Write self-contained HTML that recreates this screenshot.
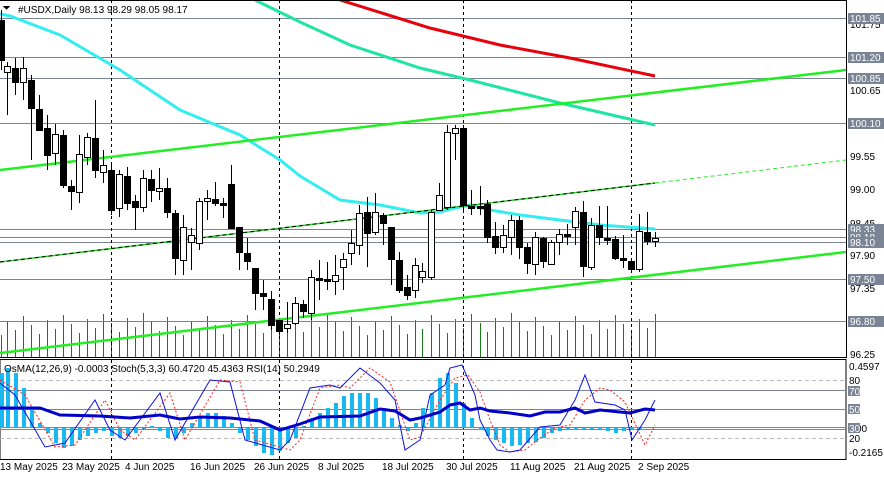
<!DOCTYPE html>
<html><head><meta charset="utf-8"><style>
body{margin:0;background:#fff;width:884px;height:479px;overflow:hidden;font-family:"Liberation Sans",sans-serif}
svg text{font-family:"Liberation Sans",sans-serif;font-size:10px;fill:#000}
</style></head><body>
<svg id="s" width="884" height="479" viewBox="0 0 884 479" xmlns="http://www.w3.org/2000/svg" shape-rendering="crispEdges">
<rect width="884" height="479" fill="#fff"/>
<g id="vol"></g>
<g stroke="#7a8494" stroke-width="1">
<line x1="0" y1="18.5" x2="846" y2="18.5"/><line x1="0" y1="57.5" x2="846" y2="57.5"/><line x1="0" y1="78.5" x2="846" y2="78.5"/><line x1="0" y1="123.5" x2="846" y2="123.5"/>
<line x1="0" y1="229.5" x2="846" y2="229.5"/><line x1="0" y1="237.5" x2="846" y2="237.5"/><line x1="0" y1="242.5" x2="846" y2="242.5"/><line x1="0" y1="279.5" x2="846" y2="279.5"/><line x1="0" y1="321.5" x2="846" y2="321.5"/>
</g>
<g stroke="#000" stroke-dasharray="3,3"><line x1="111.5" y1="0" x2="111.5" y2="459"/><line x1="279.5" y1="0" x2="279.5" y2="459"/><line x1="463.5" y1="0" x2="463.5" y2="459"/><line x1="631.5" y1="0" x2="631.5" y2="459"/></g>
<g fill="none" shape-rendering="auto">
<polyline points="340,0 430,28 500,45 570,58 655,76" stroke="#e8000b" stroke-width="3"/>
<polyline points="255,0 300,22 350,45 420,68 470,80 560,103 655,125" stroke="#1ee6a0" stroke-width="3"/>
<polyline points="0,14 10,16 60,35 120,70 180,110 240,135 280,160 300,176 340,200 380,205 420,213 440,212 455,208 470,205 490,210 520,215 560,220 600,225 655,229" stroke="#33eef0" stroke-width="3"/>
<line x1="0" y1="170" x2="846" y2="70" stroke="#22ee22" stroke-width="2.5"/>
<line x1="0" y1="353" x2="846" y2="252" stroke="#22ee22" stroke-width="2.5"/>
<line x1="0" y1="262" x2="655" y2="183" stroke="#22dd22" stroke-width="1.5"/>
<line x1="0" y1="262" x2="655" y2="183" stroke="#000" stroke-width="1" stroke-dasharray="4,3"/>
<line x1="655" y1="183" x2="846" y2="160" stroke="#22ee22" stroke-width="1" stroke-dasharray="4,3"/>
</g>
<g id="cand"></g>
<rect x="0" y="0" width="846" height="1" fill="#000"/>
<line x1="846.5" y1="0" x2="846.5" y2="358" stroke="#000"/>
<line x1="0" y1="357.5" x2="846" y2="357.5" stroke="#000"/>
<text x="18" y="13" font-size="11">#USDX,Daily  98.13 98.29 98.05 98.17</text>
<path d="M3,6 L10,6 L6.5,10z" fill="#000"/>
<g id="lab"></g>
<!-- sub panel -->
<rect x="0" y="359.5" width="846" height="100" fill="none" stroke="#000"/>
<g stroke="#bbb" stroke-dasharray="4,3"><line x1="0" y1="380.5" x2="846" y2="380.5"/><line x1="0" y1="438.5" x2="846" y2="438.5"/></g>
<g stroke="#7a8494"><line x1="0" y1="390.5" x2="846" y2="390.5"/><line x1="0" y1="409.5" x2="846" y2="409.5"/><line x1="0" y1="427.5" x2="846" y2="427.5"/><line x1="0" y1="429.5" x2="846" y2="429.5"/></g>
<g id="hist"></g>
<g fill="none" shape-rendering="auto">
<polyline stroke="#ff2020" stroke-width="1" stroke-dasharray="2,2" points="0,380 25,395 55,447 75,445 105,400 120,430 135,440 170,393 185,440 220,380 240,382 255,440 290,450 300,440 320,388 340,385 350,388 370,368 390,382 410,440 420,437 440,400 455,378 468,375 480,392 490,420 500,445 510,452 525,450 540,438 555,428 570,425 585,400 600,388 610,390 625,402 645,445 655,425"/>
<polyline stroke="#1010e0" stroke-width="1" points="0,383 15,395 45,447 65,443 95,400 110,430 125,440 160,393 175,440 210,380 230,382 245,440 280,450 290,440 310,388 330,385 340,388 360,368 380,383 395,400 405,450 420,440 430,395 445,385 450,368 462,365 475,395 480,420 490,440 497,450 510,452 520,450 540,427 560,425 575,400 585,375 595,402 615,405 625,410 632,440 645,420 655,400"/>
<polyline stroke="#0000c8" stroke-width="3" points="0,408 40,408 60,415 100,416 130,418 160,415 180,419 200,417 230,418 260,421 280,430 300,424 320,417 360,416 380,409 395,411 410,420 420,418 440,412 450,405 460,403 470,410 480,408 490,411 510,413 530,416 545,412 560,412 575,408 585,413 600,410 630,413 645,409 655,410"/>
</g>
<g font-size="10">
<text x="849" y="370">0.4597</text><text x="849" y="384">80</text><text x="849" y="456">-0.2165</text><text x="849" y="442">20</text><text x="856" y="432">00</text>
<rect x="848" y="386" width="12" height="10" fill="#7a8494"/><text x="849" y="395" fill="#fff" style="fill:#fff">70</text>
<rect x="848" y="404" width="12" height="10" fill="#7a8494"/><text x="849" y="413" style="fill:#fff">50</text>
<rect x="848" y="423" width="12" height="10" fill="#7a8494"/><text x="849" y="432" style="fill:#fff">30</text>
</g>
<g font-size="10">
<text x="0" y="470">13 May 2025</text><text x="62" y="470">23 May 2025</text><text x="125" y="470">4 Jun 2025</text><text x="190" y="470">16 Jun 2025</text><text x="254" y="470">26 Jun 2025</text><text x="318" y="470">8 Jul 2025</text><text x="382" y="470">18 Jul 2025</text><text x="446" y="470">30 Jul 2025</text><text x="510" y="470">11 Aug 2025</text><text x="574" y="470">21 Aug 2025</text><text x="638" y="470">2 Sep 2025</text>
</g>
<text x="4" y="372" font-size="10">OsMA(12,26,9) -0.0003  Stoch(5,3,3) 60.4720 45.4363  RSI(14) 50.2949</text>
<g font-size="10">
<text x="850" y="28">101.75</text><text x="850" y="94">100.65</text><text x="850" y="160">99.55</text><text x="850" y="193">99.00</text><text x="850" y="227">98.45</text><text x="850" y="259">97.90</text><text x="850" y="292">97.35</text><text x="850" y="358">96.25</text>
<rect x="848" y="13" width="36" height="11" fill="#7a8494"/><text x="850" y="22" style="fill:#fff">101.85</text>
<rect x="848" y="52" width="36" height="11" fill="#7a8494"/><text x="850" y="61" style="fill:#fff">101.20</text>
<rect x="848" y="73" width="36" height="11" fill="#7a8494"/><text x="850" y="82" style="fill:#fff">100.85</text>
<rect x="848" y="118" width="36" height="11" fill="#7a8494"/><text x="850" y="127" style="fill:#fff">100.10</text>
<rect x="848" y="224" width="36" height="11" fill="#7a8494"/><text x="850" y="233" style="fill:#fff">98.33</text>
<rect x="848" y="232" width="36" height="11" fill="#7a8494"/><text x="850" y="241" style="fill:#fff">98.18</text>
<rect x="848" y="237" width="36" height="11" fill="#7a8494"/><text x="850" y="246" style="fill:#fff">98.10</text>
<rect x="848" y="274" width="36" height="11" fill="#7a8494"/><text x="850" y="283" style="fill:#fff">97.50</text>
<rect x="848" y="316" width="36" height="11" fill="#7a8494"/><text x="850" y="325" style="fill:#fff">96.80</text>
</g>
</svg>
<script>
var C=[[1,1,20,60,10,70],[7,0,66,72,62,115],[15,1,68,82,58,95],[23,0,68,82,57,100],[31,1,80,108,75,160],[39,1,109,130,95,131],[47,1,128,155,115,170],[55,0,134,153,124,165],[63,1,135,185,130,188],[71,1,186,191,180,210],[79,0,154,192,135,203],[87,0,137,157,133,165],[95,1,138,170,100,178],[103,0,165,172,150,183],[111,1,170,210,165,215],[119,0,174,208,170,217],[127,1,176,203,167,210],[135,1,201,207,195,230],[143,0,178,207,170,212],[151,1,179,190,170,202],[159,0,188,191,168,200],[167,1,188,212,178,218],[175,1,213,258,210,275],[183,0,227,260,215,275],[191,0,235,242,228,270],[199,0,201,243,198,250],[207,0,198,201,190,220],[215,1,199,203,182,206],[223,1,203,205,198,218],[231,1,184,228,165,228],[239,1,227,252,227,270],[247,1,253,261,238,270],[255,1,268,293,268,310],[263,1,293,296,280,310],[271,1,299,325,291,330],[279,1,320,331,320,335],[287,0,324,328,302,333],[295,0,303,323,297,325],[303,1,304,311,300,318],[311,0,277,313,270,320],[319,1,278,280,260,300],[327,1,279,281,262,290],[335,0,275,281,255,295],[343,0,259,267,253,290],[351,0,243,253,230,265],[359,0,213,245,205,255],[367,1,212,233,197,267],[375,0,212,232,193,235],[383,1,215,223,213,245],[391,1,227,259,227,285],[399,1,260,290,252,293],[407,1,287,295,275,300],[415,0,265,290,258,298],[422,0,271,277,263,283],[431,0,212,277,210,280],[439,0,195,210,183,210],[447,0,132,207,125,210],[455,0,128,133,125,160],[463,1,128,205,125,210],[471,1,206,208,190,215],[480,1,206,208,186,215],[487,1,204,237,200,243],[495,1,236,247,222,254],[503,0,235,247,225,253],[511,0,220,237,215,255],[519,1,220,247,216,259],[527,1,247,263,243,274],[535,0,237,264,232,275],[543,1,238,261,237,268],[551,0,242,264,240,265],[559,0,234,242,229,255],[567,1,234,236,224,245],[575,0,211,227,207,245],[583,1,212,266,201,277],[591,0,225,267,218,270],[599,1,225,237,206,245],[607,1,238,240,206,245],[615,1,239,258,236,260],[623,1,258,260,235,268],[631,1,261,269,261,270],[639,0,231,269,214,272],[647,1,232,241,212,245],[655,0,238,241,232,247]];
var H=[-55,-60,-55,-40,-20,-5,5,15,20,18,12,8,5,3,8,10,8,5,2,-2,3,10,10,5,-5,-10,-15,-15,-12,-5,5,12,18,25,27,23,15,10,-2,-10,-15,-20,-25,-32,-35,-35,-35,-30,-20,-10,-3,3,-5,-20,-35,-50,-55,-45,-25,-10,2,8,12,15,18,17,15,14,10,5,3,2,2,2,1,2,3,5,3,1,1,0];
var s='',v='',h='';
C.forEach(function(c,i){var x=c[0];
s+='<line x1="'+(x+.5)+'" y1="'+c[4]+'" x2="'+(x+.5)+'" y2="'+c[5]+'" stroke="#000"/>';
s+='<rect x="'+(x-2.5)+'" y="'+(c[2]+.5)+'" width="6" height="'+Math.max(1,c[3]-c[2])+'" fill="'+(c[1]?'#000':'#fff')+'" stroke="#000"/>';
var vh=22+((i*37)%23);v+='<line x1="'+(x+.5)+'" y1="'+(357-vh)+'" x2="'+(x+.5)+'" y2="357" stroke="#1a7a1a"/>';
var d=H[i]||0;h+='<rect x="'+(x-1)+'" y="'+(d<0?428+d:428)+'" width="4" height="'+Math.abs(d)+'" fill="#1ab8f0"/>';});
document.getElementById('cand').innerHTML=s;document.getElementById('vol').innerHTML=v;document.getElementById('hist').innerHTML=h;
</script>
</body></html>
